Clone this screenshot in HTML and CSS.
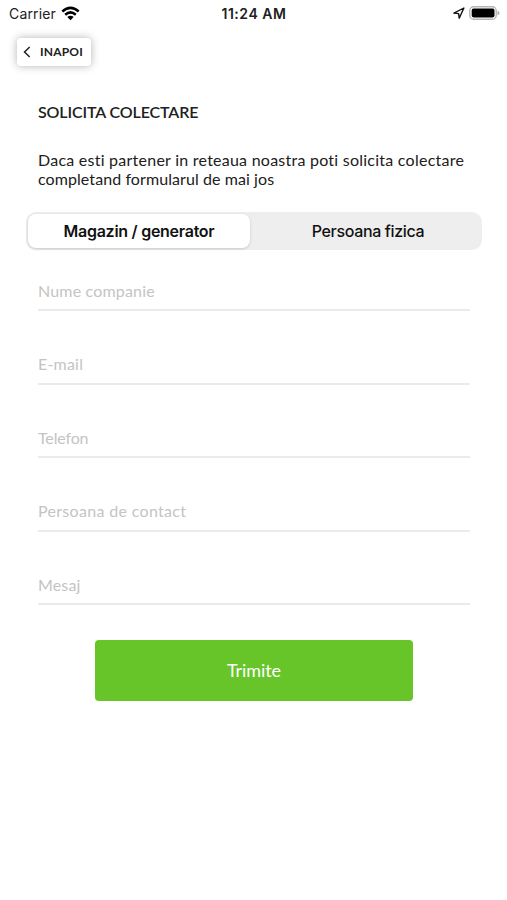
FILE: index.html
```html
<!DOCTYPE html>
<html lang="ro">
<head>
<meta charset="utf-8">
<title>Solicita colectare</title>
<link rel="stylesheet" href="styles.css">
</head>
<body>
<header class="status">
  <div class="carrier"><span class="carrier-name">Carrier</span>
    <svg class="wifi" width="19" height="15" viewBox="0 0 19 15"><g fill="none" stroke="#000" stroke-width="2.5"><path d="M1.3 5.5Q9.5-1.7 17.7 5.5"/><path d="M4.2 8.7Q9.5 4.1 14.8 8.7"/></g><path d="M6.3 11Q9.5 8.5 12.7 11L9.5 14.3Z"/></svg>
  </div>
  <span class="time">11:24 AM</span>
  <div class="indicators">
    <svg width="12" height="12" viewBox="0 0 12 12"><path d="M.9 6.1L10.9 1L6.2 11.2L5.6 6.6Z" fill="none" stroke="#111" stroke-width="1.4" stroke-linejoin="round"/></svg>
    <svg width="31" height="14" viewBox="0 0 31 14"><rect x=".8" y=".8" width="26.4" height="12.4" rx="3.8" fill="#fff" stroke="#b5b5b5" stroke-width="1.4"/><rect x="2.7" y="2.6" width="22.8" height="8.8" rx="1.8"/><path d="M28.5 4.7Q30.5 5.3 30.5 7T28.5 9.3Z" fill="#aaa"/></svg>
  </div>
</header>
<button class="back"><svg width="8" height="12" viewBox="0 0 8 12"><path d="M6.7 1L1.5 6L6.7 11" fill="none" stroke="#222" stroke-width="1.5"/></svg><span>INAPOI</span></button>
<main>
  <h1><span>SOLICITA COLECTARE</span></h1>
  <p><span class="line-one">Daca esti partener in reteaua noastra poti solicita colectare</span><br><span class="line-two">completand formularul de mai jos</span></p>
  <div class="segments">
    <button class="segment active"><span>Magazin / generator</span></button>
    <button class="segment"><span>Persoana fizica</span></button>
  </div>
  <form>
    <div class="field company"><span>Nume companie</span></div>
    <div class="field email"><span>E-mail</span></div>
    <div class="field phone"><span>Telefon</span></div>
    <div class="field contact"><span>Persoana de contact</span></div>
    <div class="field message"><span>Mesaj</span></div>
    <button type="button" class="submit"><span>Trimite</span></button>
  </form>
</main>
</body>
</html>
```
FILE: styles.css
```css
* { box-sizing: border-box; }
body { margin: 0; height: 900px; overflow: hidden; background: #fff; color: #202020; font-family: Lato, "Liberation Sans", sans-serif; font-variant-ligatures: none; }
button { border: 0; padding: 0; font: inherit; color: inherit; }
.status { height: 28px; padding: 0 7px 0 9px; display: grid; grid-template-columns: 1fr auto 1fr; align-items: center; font: 14px/28px Inter, sans-serif; }
.carrier { display: flex; align-items: center; gap: 5px; }
.carrier-name { letter-spacing: .15px; }
.wifi { margin-top: -2px; }
.time { font-weight: 600; letter-spacing: .55px; margin-left: -1px; }
.indicators { display: flex; justify-content: flex-end; align-items: center; gap: 4px; }
.indicators svg { position: relative; top: -1px; }
.back { display: flex; align-items: center; gap: 9px; width: 74px; height: 28px; margin: 10px 0 0 17px; padding: 0 0 1px 6px; border-radius: 4px; background: #fff; box-shadow: 0 0 8px rgba(0,0,0,.3); font-size: 12px; font-weight: 700; letter-spacing: .2px; }
main { padding: 36px 25px 0 26px; }
h1 { margin: 0 12px; font-size: 16px; line-height: 20px; font-weight: 600; letter-spacing: -.12px; }
p { margin: 29px 12px 0; font-size: 16px; line-height: 18.5px; white-space: nowrap; }
.line-one { letter-spacing: .245px; }
.line-two { letter-spacing: .08px; }
.segments { display: flex; height: 38px; margin-top: 24px; border-radius: 10px; background: #eee; padding: 2px; font: 500 16px Inter, sans-serif; color: #111; }
.segment { flex: 1; background: transparent; padding-left: 6px; letter-spacing: -.36px; }
.active { flex: 0 0 222px; padding: 0; background: #fff; border-radius: 8px; box-shadow: 0 1px 3px rgba(0,0,0,.16); font-weight: 600; letter-spacing: -.27px; }
form { padding: 0 12px 0; }
.field { height: 73.4px; border-bottom: 2px solid #ebebeb; padding-top: 43px; font-size: 16px; line-height: 20px; color: #c4c4c4; }
.field:first-child { height: 61.4px; padding-top: 31px; }
.company { letter-spacing: .17px; }
.email { letter-spacing: .2px; }
.phone { letter-spacing: -.15px; }
.contact { letter-spacing: .32px; }
.message { letter-spacing: .15px; }
.submit { display: block; width: 318px; height: 61px; margin: 34.6px auto 0; border-radius: 4px; background: #67c52a; color: #fff; font-size: 18px; letter-spacing: -.1px; }
```
